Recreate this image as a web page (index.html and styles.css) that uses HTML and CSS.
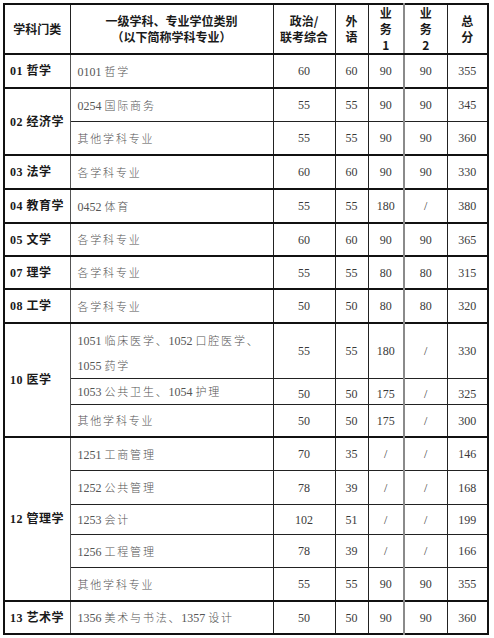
FILE: index.html
```html
<!DOCTYPE html>
<html lang="zh">
<head>
<meta charset="utf-8">
<title>分数线</title>
<link rel="stylesheet" href="styles.css">
</head>
<body>
<table class="score">
  <colgroup>
    <col class="c-cat"><col class="c-major"><col class="c-pol"><col class="c-lang"><col class="c-b1"><col class="c-b2"><col class="c-total">
  </colgroup>
  <thead>
    <tr class="head">
      <th>学科门类</th>
      <th>一级学科、专业学位类别<br>（以下简称学科专业）</th>
      <th>政治/<br>联考综合</th>
      <th>外<br>语</th>
      <th class="b1">业<br>务<br>1</th>
      <th>业<br>务<br>2</th>
      <th>总<br>分</th>
    </tr>
  </thead>
  <tbody>
    <tr class="grp h34"><td class="cat">01 哲学</td><td class="maj">0101 <span class="zh">哲学</span></td><td>60</td><td>60</td><td class="b1">90</td><td>90</td><td>355</td></tr>

    <tr class="grp h34"><td class="cat" rowspan="2">02 经济学</td><td class="maj">0254 <span class="zh">国际商务</span></td><td>55</td><td>55</td><td class="b1">90</td><td>90</td><td>345</td></tr>
    <tr class="h33"><td class="maj"><span class="zh">其他学科专业</span></td><td>55</td><td>55</td><td class="b1">90</td><td>90</td><td>360</td></tr>

    <tr class="grp h34"><td class="cat">03 法学</td><td class="maj"><span class="zh">各学科专业</span></td><td>60</td><td>60</td><td class="b1">90</td><td>90</td><td>330</td></tr>
    <tr class="grp h34"><td class="cat">04 教育学</td><td class="maj">0452 <span class="zh">体育</span></td><td>55</td><td>55</td><td class="b1">180</td><td>/</td><td>380</td></tr>
    <tr class="grp h33"><td class="cat">05 文学</td><td class="maj"><span class="zh">各学科专业</span></td><td>60</td><td>60</td><td class="b1">90</td><td>90</td><td>365</td></tr>
    <tr class="grp h33"><td class="cat">07 理学</td><td class="maj"><span class="zh">各学科专业</span></td><td>55</td><td>55</td><td class="b1">80</td><td>80</td><td>315</td></tr>
    <tr class="grp h34"><td class="cat">08 工学</td><td class="maj"><span class="zh">各学科专业</span></td><td>50</td><td>50</td><td class="b1">80</td><td>80</td><td>320</td></tr>

    <tr class="grp h53"><td class="cat" rowspan="3">10 医学</td><td class="maj two">1051 <span class="zh">临床医学、</span>1052 <span class="zh">口腔医学、</span><br>1055 <span class="zh">药学</span></td><td>55</td><td>55</td><td class="b1">180</td><td>/</td><td>330</td></tr>
    <tr class="h26 mid"><td class="maj">1053 <span class="zh">公共卫生、</span>1054 <span class="zh">护理</span></td><td>50</td><td>50</td><td class="b1">175</td><td>/</td><td>325</td></tr>
    <tr class="h32"><td class="maj"><span class="zh">其他学科专业</span></td><td>50</td><td>50</td><td class="b1">175</td><td>/</td><td>300</td></tr>

    <tr class="grp h34"><td class="cat" rowspan="5">12 管理学</td><td class="maj">1251 <span class="zh">工商管理</span></td><td>70</td><td>35</td><td class="b1">/</td><td>/</td><td>146</td></tr>
    <tr class="h34"><td class="maj">1252 <span class="zh">公共管理</span></td><td>78</td><td>39</td><td class="b1">/</td><td>/</td><td>168</td></tr>
    <tr class="h30"><td class="maj">1253 <span class="zh">会计</span></td><td>102</td><td>51</td><td class="b1">/</td><td>/</td><td>199</td></tr>
    <tr class="h33"><td class="maj">1256 <span class="zh">工程管理</span></td><td>78</td><td>39</td><td class="b1">/</td><td>/</td><td>166</td></tr>
    <tr class="h33"><td class="maj"><span class="zh">其他学科专业</span></td><td>55</td><td>55</td><td class="b1">90</td><td>90</td><td>355</td></tr>

    <tr class="grp h33"><td class="cat">13 艺术学</td><td class="maj">1356 <span class="zh">美术与书法、</span>1357 <span class="zh">设计</span></td><td>50</td><td>50</td><td class="b1">90</td><td>90</td><td>360</td></tr>
  </tbody>
</table>
</body>
</html>
```

FILE: styles.css
```css
html, body {
  margin: 0;
  padding: 0;
  background: #ffffff;
}

body {
  padding: 3px 0 0 3px;
}

.score {
  border-collapse: collapse;
  table-layout: fixed;
  width: 486px;
  border: 2px solid #111;
  font-family: "Liberation Serif", "Noto Sans CJK SC", serif;
  color: #3a3a3a;
}

.c-cat { width: 66px; }
.c-major { width: 203px; }
.c-pol { width: 62px; }
.c-lang { width: 33px; }
.c-b1 { width: 36px; }
.c-b2 { width: 43px; }
.c-total { width: 41px; }

.score th,
.score td {
  border: 1px solid #222;
  padding: 0;
  text-align: center;
  vertical-align: middle;
  line-height: 14px;
}

.head th {
  height: 47px;
  font-family: "Noto Sans CJK SC", "Liberation Sans", sans-serif;
  font-weight: 700;
  font-size: 12px;
  line-height: 16px;
  color: #1a1a1a;
  border-bottom: 2px solid #111;
}

.score td {
  font-size: 12px;
}

.score .b1 {
  border-right: 2px solid #8a8a8a;
}

.grp td {
  border-top: 2px solid #111;
}

.score td.cat {
  text-align: left;
  padding-left: 5px;
  font-family: "Liberation Serif", "Noto Sans CJK SC", serif;
  font-weight: 700;
  font-size: 12px;
  color: #1a1a1a;
  letter-spacing: 0.5px;
  border-right: 1px solid #555;
}

.score td.maj {
  text-align: left;
  padding-left: 7px;
  font-family: "Liberation Serif", "Noto Sans CJK SC", serif;
  font-size: 12px;
  color: #555;
}

.zh {
  font-family: "Noto Sans CJK SC", sans-serif;
  font-weight: 300;
  font-size: 11px;
  letter-spacing: 1.8px;
}

.h26 td { height: 25px; }
.h30 td { height: 29px; }
.h32 td { height: 31px; }
.h33 td { height: 32px; }
.h34 td { height: 33px; }

.grp.h33 td { height: 31px; }
.grp.h34 td { height: 32px; }
.grp.h53 td { height: 51px; }

.score td.two {
  line-height: 24px;
  padding-top: 4px;
  height: 47px;
}

.h26.mid td { height: 21px; padding-top: 4px; }
.h26.mid td.maj { height: 25px; padding-top: 0; }
```
